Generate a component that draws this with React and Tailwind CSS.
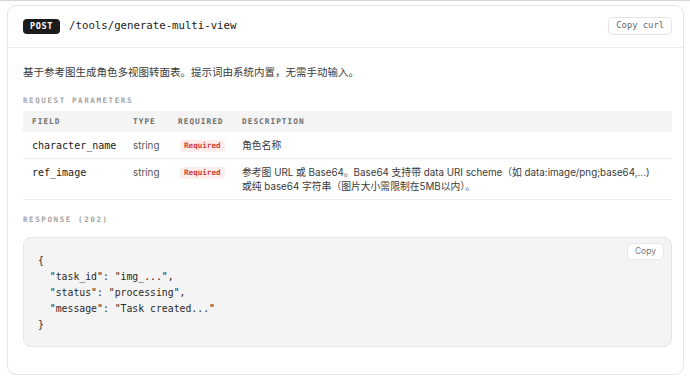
import React from 'react'

const mono = { fontFamily: '"DejaVu Sans Mono", "Liberation Mono", monospace' }

const params = [
  {
    name: 'character_name',
    type: 'string',
    desc: ['角色名称'],
  },
  {
    name: 'ref_image',
    type: 'string',
    desc: [
      '参考图 URL 或 Base64。Base64 支持带 data URI scheme（如 data:image/png;base64,...)',
      '或纯 base64 字符串（图片大小需限制在5MB以内）。',
    ],
  },
]

const codeLines = [
  '{',
  '  "task_id": "img_...",',
  '  "status": "processing",',
  '  "message": "Task created..."',
  '}',
]

function SectionLabel({ children }) {
  return (
    <div
      className="text-[7.5px] font-bold tracking-[1.6px] text-[#a3a3a3] leading-[10px]"
      style={mono}
    >
      {children}
    </div>
  )
}

export default function App() {
  return (
    <div
      className="min-h-[380px] w-[690px] bg-white"
      style={{ fontFamily: 'Inter, "Noto Sans CJK SC", sans-serif' }}
    >
      <div className="h-[1px] bg-[#d6d6d6]" />
      <div className="ml-[7px] mt-[4px] w-[677px] h-[370px] rounded-[9px] border border-[#e6e6e6] bg-white">
        {/* header */}
        <div className="flex h-[42px] items-center justify-between border-b border-[#eeeeee] pl-[15px] pr-[11px]">
          <div className="flex items-center gap-[9px]">
            <span
              className="flex h-[15px] items-center rounded-[4px] bg-[#1c1c1c] px-[7px] text-[8.6px] font-bold tracking-[0.6px] text-white"
              style={mono}
            >
              POST
            </span>
            <span className="text-[10.7px] text-[#1a1a1a]" style={mono}>
              /tools/generate-multi-view
            </span>
          </div>
          <button
            className="mt-[-2px] h-[18px] rounded-[5px] border border-[#e3e3e3] bg-white px-[7px] text-[8.8px] text-[#666]"
            style={mono}
          >
            Copy curl
          </button>
        </div>

        <div className="pl-[15px] pr-[11px]">
          <p className="mt-[17px] text-[10.5px] leading-[16px] text-[#3a3a3a]">
            基于参考图生成角色多视图转面表。提示词由系统内置，无需手动输入。
          </p>

          <div className="mt-[15px]">
            <SectionLabel>REQUEST PARAMETERS</SectionLabel>
          </div>

          {/* table */}
          <div className="mt-[5px]">
            <div
              className="grid h-[21px] grid-cols-[101px_45px_64px_1fr] items-center bg-[#f4f4f4] pl-[9px] text-[7.8px] font-bold tracking-[1px] text-[#707070]"
              style={mono}
            >
              <span>FIELD</span>
              <span>TYPE</span>
              <span>REQUIRED</span>
              <span>DESCRIPTION</span>
            </div>
            {params.map((p) => (
              <div
                key={p.name}
                className="grid grid-cols-[101px_45px_64px_1fr] items-start border-b border-[#eeeeee] pt-[7px] pb-[5.5px] pl-[9px] text-[10px] leading-[13.5px]"
              >
                <div className="h-[13.5px] text-[10px] leading-[13.5px] text-[#1a1a1a]" style={mono}>
                  {p.name}
                </div>
                <div className="h-[13.5px] text-[9.8px] leading-[13.5px] text-[#555]">{p.type}</div>
                <div className="flex h-[13.5px] items-center pl-[2px]">
                  <span
                    className="block rounded-[3px] bg-[#fdeeee] px-[4px] text-[7.6px] font-bold leading-[12px] text-[#d23b3b]"
                    style={mono}
                  >
                    Required
                  </span>
                </div>
                <div className="text-[9.8px] leading-[13.5px] text-[#3a3a3a]">
                  {p.desc.map((line, i) => (
                    <div key={i} className="h-[13.5px] whitespace-nowrap">
                      {line}
                    </div>
                  ))}
                </div>
              </div>
            ))}
          </div>

          <div className="mt-[15px]">
            <SectionLabel>RESPONSE (202)</SectionLabel>
          </div>

          {/* code block */}
          <div className="relative mt-[12px] h-[110px] rounded-[8px] border border-[#e6e6e6] bg-[#f4f4f4] pl-[14px] pt-[15px]">
            <button className="absolute right-[7px] top-[5px] h-[17px] rounded-[5px] border border-[#e8e8e8] bg-white px-[7px] text-[8.5px] text-[#777]">
              Copy
            </button>
            <pre className="text-[9.8px] leading-[16px] text-[#2a2a2a]" style={mono}>
              {codeLines.join('\n')}
            </pre>
          </div>
        </div>
      </div>
    </div>
  )
}
